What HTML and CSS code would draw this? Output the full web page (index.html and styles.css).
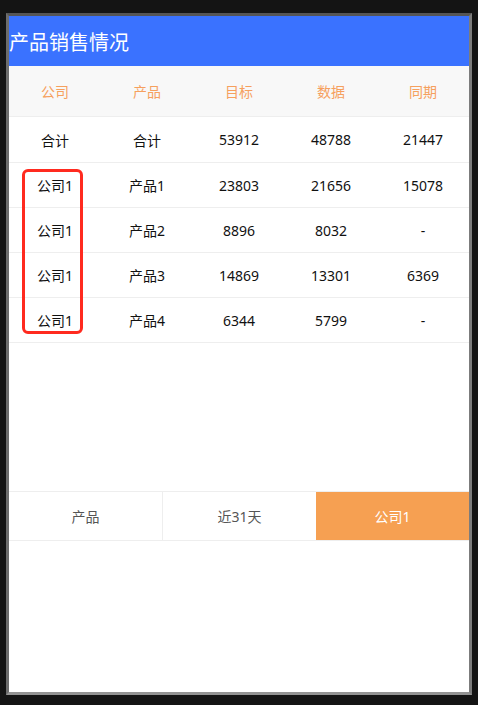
FILE: index.html
```html
<!DOCTYPE html>
<html lang="zh-CN">
<head>
<meta charset="UTF-8">
<meta name="viewport" content="width=device-width, initial-scale=1.0">
<title>产品销售情况</title>
<link rel="stylesheet" href="styles.css">
</head>
<body>
<div class="frame">
  <header class="title">产品销售情况</header>

  <div class="table">
    <div class="row head">
      <div>公司</div><div>产品</div><div>目标</div><div>数据</div><div>同期</div>
    </div>
    <div class="row total">
      <div>合计</div><div>合计</div><div>53912</div><div>48788</div><div>21447</div>
    </div>
    <div class="row">
      <div>公司1</div><div>产品1</div><div>23803</div><div>21656</div><div>15078</div>
    </div>
    <div class="row">
      <div>公司1</div><div>产品2</div><div>8896</div><div>8032</div><div>-</div>
    </div>
    <div class="row">
      <div>公司1</div><div>产品3</div><div>14869</div><div>13301</div><div>6369</div>
    </div>
    <div class="row">
      <div>公司1</div><div>产品4</div><div>6344</div><div>5799</div><div>-</div>
    </div>
    <div class="mark"></div>
  </div>

  <div class="tabs">
    <div class="tab">产品</div>
    <div class="tab">近31天</div>
    <div class="tab active">公司1</div>
  </div>
</div>
</body>
</html>
```

FILE: styles.css
```css
*{ box-sizing:border-box; margin:0; padding:0; }
body{ background:#141414; font-family:'Noto Sans','Noto Sans CJK SC',sans-serif; color:#111; }

.frame{
  width:466px; height:682px; margin:13px 0 0 6px;
  background:#fff;
  border:3px solid #6d6d6d;
  border-top-color:#555; border-right-color:#7c7c7c; border-bottom-color:#939393;
}

.title{
  height:50px; background:#3a72ff; color:#fff;
  font-size:20px; line-height:50px; padding-top:2px;
}

.table{ position:relative; }
.row{ display:grid; grid-template-columns:repeat(5,1fr); height:45px; border-bottom:1px solid #eeeeee; font-size:14px; }
.row div{ display:flex; align-items:center; justify-content:center; }
.row.head{ height:51px; background:#f8f8f8; color:#f6a05e; }
.row.total{ height:46px; }

/* 高亮框 */
.mark{
  position:absolute; left:13px; top:103px; width:61px; height:165px;
  border:3px solid #ff2a1f; border-radius:6px;
}

.tabs{ display:flex; margin-top:148px; height:50px; border-top:1px solid #eee; border-bottom:1px solid #eee; }
.tab{ flex:1; display:flex; align-items:center; justify-content:center; font-size:14px; color:#555; }
.tab + .tab{ border-left:1px solid #eee; }
.tab.active{ background:#f6a052; color:#fff; border-left:none; }
```
